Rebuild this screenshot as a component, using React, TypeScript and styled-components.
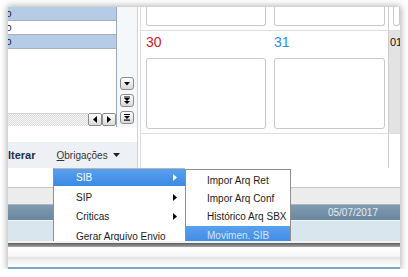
import React from "react";
import styled, { createGlobalStyle } from "styled-components";

const Global = createGlobalStyle`
  *, *::before, *::after { box-sizing: border-box; }
  html, body { margin: 0; padding: 0; background: #fff; }
  body { font-family: "Liberation Sans", Arial, sans-serif; }
`;

const Frame = styled.div`
  position: relative;
  margin: 7px 0 0 8px;
  width: 392px;
  height: 262px;
  overflow: hidden;
  background: #fff;
  box-shadow: 0 0 7px 1px rgba(0, 0, 0, 0.32);
  display: flex;
  flex-direction: column;
`;

const Top = styled.div`
  flex: none;
  height: 161px;
  display: flex;
`;

const LeftPanel = styled.div`
  flex: none;
  width: 130px;
  display: flex;
  flex-direction: column;
  border-right: 1px solid #c6d4e3;
`;

const ListArea = styled.div`
  flex: none;
  height: 120px;
  display: flex;
`;

const List = styled.div`
  width: 109px;
  border-right: 1px solid #9ba8b6;
  display: flex;
  flex-direction: column;
  overflow: hidden;
  background: #fff;
`;

const Row = styled.div<{ $sel?: boolean }>`
  flex: none;
  height: 14px;
  border-bottom: 1px solid #a7b2be;
  background: ${(p) => (p.$sel ? "#b6cce6" : "#fff")};
  font-size: 10px;
  line-height: 13px;
  color: #1a1a1a;
  text-indent: -2px;
  white-space: nowrap;
`;

const ListFill = styled.div`
  flex: 1;
`;

const HScroll = styled.div`
  flex: none;
  height: 13px;
  display: flex;
  margin-bottom: 1px;
`;

const Track = styled.div`
  flex: 1;
  border-top: 1px solid #d4d4d4;
  background: repeating-conic-gradient(#dedede 0 25%, #f6f6f6 0 50%) 0 0 / 2px 2px;
`;

const SmallBtn = styled.div<{ $w: number }>`
  flex: none;
  width: ${(p) => p.$w}px;
  height: 13px;
  border: 1px solid #8c8c8c;
  border-radius: 2px;
  background: linear-gradient(#ffffff, #dadada);
  display: flex;
  align-items: center;
  justify-content: center;
`;

const ButtonColumn = styled.div`
  width: 20px;
  background: #f5f8fb;
  display: flex;
  flex-direction: column;
  justify-content: flex-end;
  align-items: center;
  gap: 4px;
  padding: 0 1px 3px 0;
`;

const WhiteGap = styled.div`
  flex: none;
  height: 15px;
  background: #fff;
`;

const Toolbar = styled.div`
  flex: 1;
  background: #edf1f6;
  display: flex;
  align-items: center;
  gap: 21px;
  font-size: 10px;
`;

const ToolLabel = styled.span`
  font-size: 11px;
  font-weight: bold;
  color: #1d2d4c;
`;

const ToolMenu = styled.span`
  display: flex;
  align-items: center;
  gap: 5px;
  color: #333;
  font-size: 10px;
  u {
    text-decoration: underline;
  }
`;

const Calendar = styled.div`
  flex: 1;
  padding-left: 2px;
  display: flex;
  background: #fff;
`;

const Grid = styled.div`
  flex: 1;
  border-left: 1px solid #dcdcdc;
  display: grid;
  grid-template-columns: 128px 119px 1fr;
  grid-template-rows: 24px 103px 1fr;
`;

const Cell = styled.div<{ $muted?: boolean; $edge?: boolean; $open?: boolean }>`
  border-bottom: ${(p) => (p.$open ? "none" : "1px solid #dedede")};
  border-left: ${(p) => (p.$edge ? "1px solid #cdcdcd" : "none")};
  background: ${(p) => (p.$muted ? "#e3e3e3" : "#fff")};
  padding: ${(p) => (p.$edge ? "0 0 0 1px" : "0 3px 0 5px")};
  display: flex;
  flex-direction: column;
  overflow: hidden;
`;

const DayNum = styled.div<{ $color: string; $size: number }>`
  margin-top: 3px;
  font-size: ${(p) => p.$size}px;
  line-height: 16px;
  color: ${(p) => p.$color};
  white-space: nowrap;
`;

const Card = styled.div<{ $cut?: boolean; $shift?: number }>`
  flex: none;
  height: ${(p) => (p.$cut ? 19 : 71)}px;
  margin-top: ${(p) => (p.$cut ? 0 : 8)}px;
  margin-left: ${(p) => p.$shift ?? 0}px;
  border: 1px solid #c9c9c9;
  border-top: ${(p) => (p.$cut ? "none" : "1px solid #c9c9c9")};
  border-radius: ${(p) => (p.$cut ? "0 0 3px 3px" : "3px")};
  background: #fff;
`;

const Bottom = styled.div`
  flex: 1;
  display: flex;
  flex-direction: column;
`;

const WhiteRow = styled.div`
  flex: none;
  height: 20px;
  background: #fff;
  border-bottom: 1px solid #c4c4c4;
`;

const GrayBand = styled.div`
  flex: none;
  height: 17px;
  background: #ececec;
  border-bottom: 1px solid #aab5bf;
`;

const DarkBand = styled.div`
  flex: none;
  height: 15px;
  background: linear-gradient(#7f9ab1, #6b889f);
  display: flex;
  align-items: center;
  justify-content: flex-end;
  padding-right: 22px;
  font-size: 10px;
  color: #e4ebf2;
`;

const LightRow = styled.div`
  flex: none;
  height: 21px;
  background: #dae6ee;
  border-top: 1px solid #eef4f8;
`;

const StatusBar = styled.div`
  position: relative;
  z-index: 3;
  flex: 1;
  display: flex;
  flex-direction: column;
  background: #fff;
`;

const StatusGap = styled.div`
  height: 2px;
  background: #f3f3f3;
`;

const StatusRule = styled.div`
  height: 4px;
  background: linear-gradient(#5c5c5c, #a5a5a5);
`;

const StatusBody = styled.div`
  flex: 1;
  background: linear-gradient(#ffffff 0%, #f7f7f7 45%, #e4e4e4 52%, #f6f6f6 75%, #fdfdfd 100%);
`;

const StatusLine = styled.div`
  height: 2px;
  background: #7ea6c8;
`;

const MenuLayer = styled.div`
  position: absolute;
  left: 45px;
  top: 161px;
  z-index: 2;
  display: flex;
  align-items: flex-start;
`;

const MainMenu = styled.div`
  width: 132px;
  height: 80px;
  background: #fff;
  border-left: 1px solid #8f8f8f;
  border-top: 1px solid #b5b5b5;
  display: flex;
  flex-direction: column;
  gap: 2.6px;
`;

const SubMenu = styled.div`
  width: 106px;
  height: 80px;
  margin-top: 1px;
  background: #fff;
  border: 1px solid #8f8f8f;
  padding-top: 1px;
  display: flex;
  flex-direction: column;
`;

const Item = styled.div<{ $active?: boolean; $h: number; $pl: number; $fade?: boolean }>`
  flex: none;
  height: ${(p) => p.$h}px;
  padding: 0 8px 0 ${(p) => p.$pl}px;
  display: flex;
  align-items: center;
  justify-content: space-between;
  font-size: 10px;
  white-space: nowrap;
  color: ${(p) => (p.$active ? (p.$fade ? "#d4e4fa" : "#ffffff") : "#1c1c1c")};
  background: ${(p) => (p.$active ? "linear-gradient(#5aa0ee, #3a89e3)" : "transparent")};
`;

const Tri = ({ d, w, h, color = "#000" }: { d: string; w: number; h: number; color?: string }) => (
  <svg width={w} height={h} viewBox={`0 0 ${w} ${h}`}>
    <path d={d} fill={color} />
  </svg>
);

const NavIcon = ({ kind }: { kind: number }) => (
  <svg width="12" height="11" viewBox="0 0 12 11">
    {kind === 1 && <path d="M3 4h6l-3 3.5z" fill="#000" />}
    {kind === 2 && (
      <>
        <rect x="3" y="1.5" width="6" height="1" fill="#000" />
        <path d="M3 3h6l-3 3z M3 6h6l-3 3z" fill="#000" />
      </>
    )}
    {kind === 3 && (
      <>
        <rect x="3" y="2" width="6" height="1" fill="#000" />
        <path d="M3 4h6l-3 3z" fill="#000" />
        <rect x="3" y="7.5" width="6" height="1.2" fill="#000" />
      </>
    )}
  </svg>
);

const NavBtn = styled.div`
  width: 14px;
  height: 13px;
  border: 1px solid #8a8a8a;
  border-radius: 3px;
  background: linear-gradient(#ffffff, #d9d9d9);
  display: flex;
  align-items: center;
  justify-content: center;
`;

export default function App() {
  return (
    <>
      <Global />
      <Frame>
        <Top>
          <LeftPanel>
            <ListArea>
              <List>
                <Row $sel>o</Row>
                <Row>o</Row>
                <Row $sel>o</Row>
                <ListFill />
                <HScroll>
                  <Track />
                  <SmallBtn $w={14}>
                    <Tri w={4} h={7} d="M4 0v7L0 3.5z" />
                  </SmallBtn>
                  <SmallBtn $w={14}>
                    <Tri w={4} h={7} d="M0 0v7l4-3.5z" />
                  </SmallBtn>
                </HScroll>
              </List>
              <ButtonColumn>
                <NavBtn>
                  <NavIcon kind={1} />
                </NavBtn>
                <NavBtn>
                  <NavIcon kind={2} />
                </NavBtn>
                <NavBtn>
                  <NavIcon kind={3} />
                </NavBtn>
              </ButtonColumn>
            </ListArea>
            <WhiteGap />
            <Toolbar>
              <ToolLabel>lterar</ToolLabel>
              <ToolMenu>
                <span>
                  <u>O</u>brigações
                </span>
                <Tri w={7} h={4} d="M0 0h7L3.5 4z" color="#222" />
              </ToolMenu>
            </Toolbar>
          </LeftPanel>
          <Calendar>
            <Grid>
              <Cell>
                <Card $cut />
              </Cell>
              <Cell>
                <Card $cut />
              </Cell>
              <Cell $edge>
                <Card $cut $shift={3} />
              </Cell>
              <Cell>
                <DayNum $color="#d4202c" $size={14}>30</DayNum>
                <Card />
              </Cell>
              <Cell>
                <DayNum $color="#2490ec" $size={14}>31</DayNum>
                <Card />
              </Cell>
              <Cell $edge $muted>
                <DayNum $color="#111" $size={11}>01</DayNum>
              </Cell>
              <Cell $open />
              <Cell $open />
              <Cell $open $edge />
            </Grid>
          </Calendar>
        </Top>
        <Bottom>
          <WhiteRow />
          <GrayBand />
          <DarkBand>05/07/2017</DarkBand>
          <LightRow />
          <StatusBar>
            <StatusGap />
            <StatusRule />
            <StatusBody />
            <StatusLine />
          </StatusBar>
        </Bottom>
        <MenuLayer>
          <MainMenu>
            <Item $active $h={17} $pl={22}>
              <span>SIB</span>
              <Tri w={4} h={7} d="M0 0v7l4-3.5z" color="#fff" />
            </Item>
            <Item $h={17} $pl={22}>
              <span>SIP</span>
              <Tri w={4} h={7} d="M0 0v7l4-3.5z" />
            </Item>
            <Item $h={17} $pl={22}>
              <span>Criticas</span>
              <Tri w={4} h={7} d="M0 0v7l4-3.5z" />
            </Item>
            <Item $h={17} $pl={22}>
              <span>Gerar Arquivo Envio</span>
            </Item>
          </MainMenu>
          <SubMenu>
            <Item $h={18.4} $pl={21}>
              <span>Impor Arq Ret</span>
            </Item>
            <Item $h={18.4} $pl={21}>
              <span>Impor Arq Conf</span>
            </Item>
            <Item $h={18.4} $pl={21}>
              <span>Histórico Arq SBX</span>
            </Item>
            <Item $active $fade $h={18.4} $pl={21}>
              <span>Movimen. SIB</span>
            </Item>
          </SubMenu>
        </MenuLayer>
      </Frame>
    </>
  );
}
